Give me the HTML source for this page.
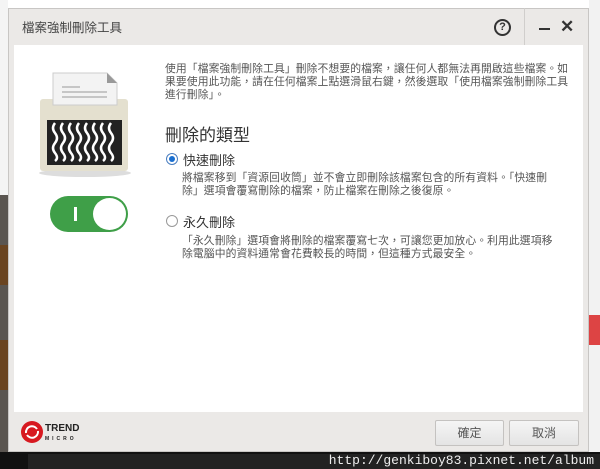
<!DOCTYPE html><html><head><meta charset="utf-8"><style>
*{margin:0;padding:0;box-sizing:border-box}
body{width:600px;height:469px;overflow:hidden;position:relative;background:#fff;font-family:"Liberation Sans","Noto Sans CJK TC",sans-serif;}
.abs{position:absolute}
.p{font-size:10.8px;letter-spacing:0.1px;color:#555;line-height:13px;white-space:nowrap}
</style></head><body>
<div class="abs" style="left:0;top:0;width:8px;height:195px;background:#f4f4f4"></div>
<div class="abs" style="left:0;top:195px;width:8px;height:257px;background:#5a5550"></div>
<div class="abs" style="left:0;top:245px;width:8px;height:40px;background:#6a4420"></div>
<div class="abs" style="left:0;top:340px;width:8px;height:50px;background:#6a4420"></div>
<div class="abs" style="left:589px;top:0;width:11px;height:452px;background:#f2f2f2"></div>
<div class="abs" style="left:589px;top:315px;width:11px;height:30px;background:#d44"></div>
<div class="abs" style="left:0;top:452px;width:600px;height:17px;background:#111"></div>
<div class="abs" style="left:28px;top:454px;width:572px;height:15px;background:#222"></div>
<div class="abs" style="right:6px;top:452px;font-family:'Liberation Mono',monospace;font-size:13px;color:#eee;line-height:17px">http://genkiboy83.pixnet.net/album</div>
<div class="abs" style="left:8px;top:8px;width:581px;height:444px;background:#ebe9e7;border:1px solid #c8c6c4"></div>
<div class="abs" style="left:22px;top:17px;font-size:12.5px;color:#444">檔案強制刪除工具</div>
<div class="abs" style="left:524px;top:8px;width:1px;height:37px;background:#d0cecc"></div>
<div class="abs" style="left:494px;top:19px;width:17px;height:17px;border:2px solid #333;border-radius:50%;font-size:11px;font-weight:bold;text-align:center;line-height:13px;color:#333">?</div>
<div class="abs" style="left:539px;top:28px;width:11px;height:2px;background:#333"></div>
<div class="abs" style="left:560px;top:17px;font-size:17px;font-weight:bold;color:#333">✕</div>
<div class="abs" style="left:14px;top:45px;width:569px;height:367px;background:#fff"></div>
<svg class="abs" style="left:35px;top:65px" width="100" height="115" viewBox="0 0 100 115">
<ellipse cx="50" cy="108" rx="46" ry="4" fill="#ddd"/>
<rect x="5" y="34" width="88" height="72" rx="3" fill="#e4e0cf"/>
<path d="M18 8 H72 L82 18 V40 H18 Z" fill="#f3f3f3" stroke="#ccc"/>
<path d="M72 8 L82 18 H72 Z" fill="#999"/>
<line x1="27" y1="22" x2="45" y2="22" stroke="#999"/><line x1="27" y1="27" x2="72" y2="27" stroke="#999"/><line x1="27" y1="32" x2="72" y2="32" stroke="#999"/>
<rect x="12" y="55" width="75" height="45" fill="#222"/>
<g stroke="#fff" stroke-width="2.5" fill="none">
<path d="M20 58 q-4 5 0 10 q4 5 0 10 q-4 5 0 10 q4 5 0 8"/><path d="M28 58 q-4 5 0 10 q4 5 0 10 q-4 5 0 10 q4 5 0 8"/><path d="M36 58 q-4 5 0 10 q4 5 0 10 q-4 5 0 10 q4 5 0 8"/><path d="M44 58 q-4 5 0 10 q4 5 0 10 q-4 5 0 10 q4 5 0 8"/><path d="M52 58 q-4 5 0 10 q4 5 0 10 q-4 5 0 10 q4 5 0 8"/><path d="M60 58 q-4 5 0 10 q4 5 0 10 q-4 5 0 10 q4 5 0 8"/><path d="M68 58 q-4 5 0 10 q4 5 0 10 q-4 5 0 10 q4 5 0 8"/><path d="M76 58 q-4 5 0 10 q4 5 0 10 q-4 5 0 10 q4 5 0 8"/>
</g></svg>
<div class="abs" style="left:50px;top:196px;width:78px;height:36px;border-radius:18px;background:#3f9f48"></div>
<div class="abs" style="left:74px;top:207px;width:3px;height:14px;background:#fff"></div>
<div class="abs" style="left:93px;top:198px;width:33px;height:32px;border-radius:50%;background:#fff"></div>
<div class="abs p" style="left:165px;top:63px">使用「檔案強制刪除工具」刪除不想要的檔案，讓任何人都無法再開啟這些檔案。如<br>果要使用此功能，請在任何檔案上點選滑鼠右鍵，然後選取「使用檔案強制刪除工具<br>進行刪除」。</div>
<div class="abs" style="left:165px;top:121px;font-size:17px;color:#333">刪除的類型</div>
<div class="abs" style="left:166px;top:153px;width:12px;height:12px;border:1px solid #4a7ec0;border-radius:50%"><div style="margin:2px;width:6px;height:6px;border-radius:50%;background:#1a6fd0"></div></div>
<div class="abs" style="left:183px;top:150px;font-size:13px;color:#333">快速刪除</div>
<div class="abs p" style="left:182px;top:172px">將檔案移到「資源回收筒」並不會立即刪除該檔案包含的所有資料。「快速刪<br>除」選項會覆寫刪除的檔案，防止檔案在刪除之後復原。</div>
<div class="abs" style="left:166px;top:215px;width:12px;height:12px;border:1px solid #999;border-radius:50%"></div>
<div class="abs" style="left:183px;top:212px;font-size:13px;color:#333">永久刪除</div>
<div class="abs p" style="left:182px;top:235px">「永久刪除」選項會將刪除的檔案覆寫七次，可讓您更加放心。利用此選項移<br>除電腦中的資料通常會花費較長的時間，但這種方式最安全。</div>
<svg class="abs" style="left:20px;top:420px" width="24" height="24"><circle cx="12" cy="12" r="11" fill="#d71920"/><path d="M6 13 a6 6 0 0 1 11-4 M18 11 a6 6 0 0 1-11 4" stroke="#fff" stroke-width="2" fill="none"/></svg>
<div class="abs" style="left:45px;top:424px;font-size:10px;font-weight:bold;color:#222;line-height:10px">TREND</div>
<div class="abs" style="left:45px;top:436px;font-size:5px;font-weight:bold;color:#222;letter-spacing:3px">MICRO</div>
<div class="abs" style="left:435px;top:420px;width:69px;height:26px;border:1px solid #c4c2c0;border-radius:2px;background:linear-gradient(#f5f5f5,#e4e4e4);font-size:12px;color:#555;text-align:center;line-height:24px">確定</div>
<div class="abs" style="left:509px;top:420px;width:70px;height:26px;border:1px solid #c4c2c0;border-radius:2px;background:linear-gradient(#f5f5f5,#e4e4e4);font-size:12px;color:#555;text-align:center;line-height:24px">取消</div>
</body></html>
